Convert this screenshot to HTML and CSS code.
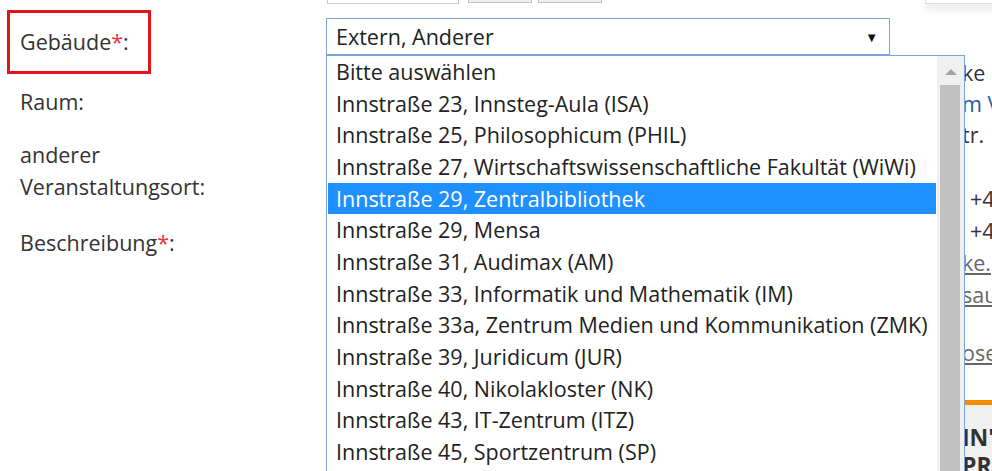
FILE: index.html
```html
<!DOCTYPE html>
<html lang="de">
<head>
  <meta charset="UTF-8">
  <title>Veranstaltung eintragen</title>
  <link rel="stylesheet" href="styles.css">
</head>
<body>

<div class="topbar">
  <div class="top-input"></div>
  <div class="top-btn"></div>
  <div class="top-btn"></div>
</div>
<div class="popup-edge"></div>

<div class="page">
  <div class="form">
    <div class="row row-building">
      <div class="label">
        <span class="highlight">Gebäude<span class="req">*</span>:</span>
      </div>
      <div class="field">
        <div class="select">
          <span>Extern, Anderer</span>
          <span class="arrow">▼</span>
        </div>
        <div class="dropdown">
          <ul class="options">
            <li>Bitte auswählen</li>
            <li>Innstraße 23, Innsteg-Aula (ISA)</li>
            <li>Innstraße 25, Philosophicum (PHIL)</li>
            <li>Innstraße 27, Wirtschaftswissenschaftliche Fakultät (WiWi)</li>
            <li class="active">Innstraße 29, Zentralbibliothek</li>
            <li>Innstraße 29, Mensa</li>
            <li>Innstraße 31, Audimax (AM)</li>
            <li>Innstraße 33, Informatik und Mathematik (IM)</li>
            <li>Innstraße 33a, Zentrum Medien und Kommunikation (ZMK)</li>
            <li>Innstraße 39, Juridicum (JUR)</li>
            <li>Innstraße 40, Nikolakloster (NK)</li>
            <li>Innstraße 43, IT-Zentrum (ITZ)</li>
            <li>Innstraße 45, Sportzentrum (SP)</li>
          </ul>
          <div class="scrollbar">
            <span class="scroll-up"></span>
            <span class="thumb"></span>
          </div>
        </div>
      </div>
    </div>

    <div class="row row-room">
      <div class="label">Raum:</div>
    </div>

    <div class="row row-other">
      <div class="label">anderer<br>Veranstaltungsort:</div>
    </div>

    <div class="row row-desc">
      <div class="label">Beschreibung<span class="req">*</span>:</div>
    </div>
  </div>

  <div class="sidebar">
    <div class="side-block first">
      <p>ke</p>
      <p class="blue">m V</p>
      <p>tr.</p>
    </div>
    <div class="side-block second">
      <p class="indent">+4</p>
      <p class="indent">+4</p>
      <p class="link">ke.</p>
      <p class="link">sau</p>
    </div>
    <div class="side-block third">
      <p class="link">ose</p>
    </div>
    <div class="teaser">
      <p>IN'</p>
      <p>PR</p>
    </div>
  </div>
</div>

</body>
</html>
```

FILE: styles.css
```css
body {
  font-family: 'Open Sans', 'Liberation Sans', sans-serif;
  background: #fff;
  margin: 0;
  color: #333;
  overflow: hidden;
}

.topbar {
  display: flex;
  align-items: flex-end;
  height: 4px;
  overflow: hidden;
  padding-left: 327px;
}

.top-input {
  width: 130px;
  height: 30px;
  border: 1px solid #ccc;
  border-top: none;
  flex-shrink: 0;
}

.top-btn {
  width: 62px;
  height: 30px;
  margin-left: 9px;
  margin-bottom: 1px;
  background: #eee;
  border: 1px solid #c4c4c4;
  border-top: none;
  flex-shrink: 0;
}

.top-btn + .top-btn {
  margin-left: 6px;
}

.popup-edge {
  position: absolute;
  top: 0;
  left: 925px;
  width: 80px;
  height: 3px;
  background: #fff;
  border: 1px solid #ddd;
  border-top: none;
  box-shadow: 0 4px 8px rgba(0,0,0,0.18);
  z-index: 3;
}

.page {
  display: flex;
}

.form {
  width: 957px;
  flex-shrink: 0;
}

.row {
  display: flex;
}

.label {
  width: 306px;
  padding-left: 20px;
  font-size: 21.5px;
  line-height: 32px;
  color: #333;
}

.req {
  color: #f0303c;
}

.row-building {
  margin-top: 6px;
  height: 64px;
}

.row-building .label {
  padding-left: 7px;
  width: 319px;
}

.highlight {
  display: inline-block;
  border: 3px solid #e3131b;
  padding: 0 19px 0 10px;
  line-height: 58px;
}

.row-room {
  padding: 12px 0;
}

.row-other {
  padding-top: 9px;
}

.row-desc {
  padding-top: 24px;
}

.field {
  position: relative;
  padding-top: 8px;
}

.select {
  box-sizing: border-box;
  width: 564px;
  height: 37px;
  border: 1px solid #7ca3d8;
  padding: 0 9px;
  display: flex;
  align-items: center;
  justify-content: space-between;
  font-size: 21.5px;
  color: #222;
}

.arrow {
  font-size: 13px;
  color: #111;
  margin-right: 2px;
}

.dropdown {
  position: absolute;
  top: 45px;
  left: 0;
  box-sizing: border-box;
  width: 639px;
  height: 440px;
  border: 1px solid #7ca3d8;
  background: #fff;
  display: flex;
  z-index: 2;
}

.options {
  list-style: none;
  margin: 0;
  padding: 0;
  flex: 1;
  overflow: hidden;
}

.options li {
  margin: 0 1px;
  padding-left: 8px;
  font-size: 21.5px;
  line-height: 31.67px;
  height: 31.67px;
  color: #222;
  white-space: nowrap;
}

.options li.active {
  background: #1e90ff;
  color: #fff;
}

.scrollbar {
  width: 27px;
  background: #f0f0f0;
  position: relative;
  flex-shrink: 0;
}

.scroll-up {
  position: absolute;
  top: 13px;
  left: 8px;
  width: 0;
  height: 0;
  border-left: 6px solid transparent;
  border-right: 6px solid transparent;
  border-bottom: 6px solid #a3a3a3;
}

.thumb {
  position: absolute;
  top: 29px;
  left: 3px;
  width: 20px;
  bottom: 0;
  background: #c1c1c1;
}

.sidebar {
  flex: 1;
  overflow: hidden;
  padding-left: 5px;
  font-size: 21.5px;
  color: #333;
  white-space: nowrap;
}

.sidebar p {
  margin: 0;
}

.side-block.first {
  padding-top: 53px;
  line-height: 31px;
}

.side-block.second {
  margin-top: 33px;
  line-height: 32px;
}

.side-block.third {
  margin-top: 26px;
  line-height: 32px;
}

.blue {
  color: #1f5aa6;
}

.indent {
  padding-left: 8px;
}

.link {
  color: #666;
  text-decoration: underline;
}

.teaser {
  margin-top: 31px;
  margin-left: -5px;
  padding-left: 5px;
  border-top: 5px solid #f28c00;
  background: #f0f0f0;
  padding-top: 18px;
  font-size: 23px;
  font-weight: bold;
  line-height: 28px;
  color: #333;
  height: 80px;
}
```
